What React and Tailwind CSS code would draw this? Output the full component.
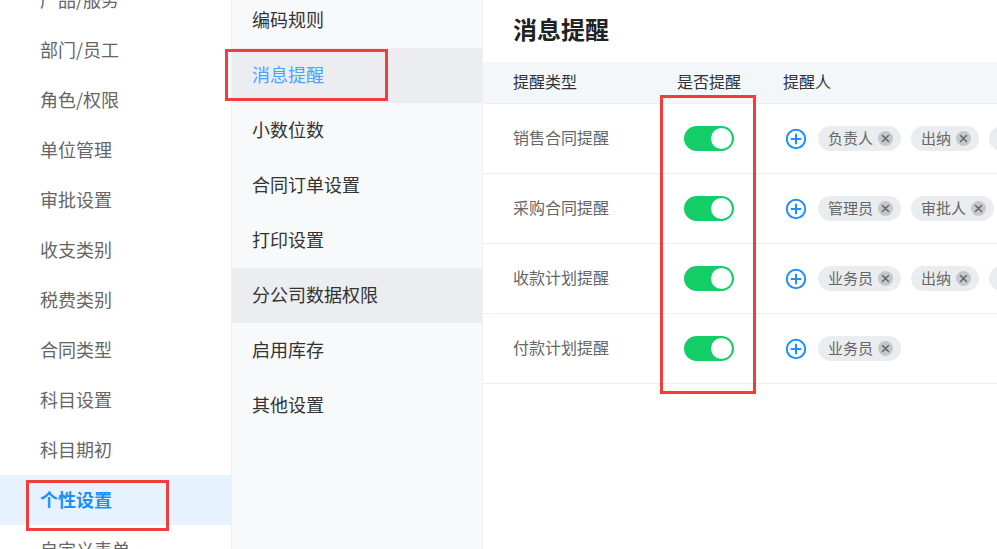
import React from "react";

const font = { fontFamily: '"Noto Sans CJK SC", "Noto Sans", sans-serif' };

const sideItems = ["产品/服务", "部门/员工", "角色/权限", "单位管理", "审批设置", "收支类别", "税费类别", "合同类型", "科目设置", "科目期初", "个性设置", "自定义表单"];
const midItems = ["编码规则", "消息提醒", "小数位数", "合同订单设置", "打印设置", "分公司数据权限", "启用库存", "其他设置"];
const rows = [
  { name: "销售合同提醒", tags: ["负责人", "出纳", "审批人"] },
  { name: "采购合同提醒", tags: ["管理员", "审批人", "出纳"] },
  { name: "收款计划提醒", tags: ["业务员", "出纳", "审批人"] },
  { name: "付款计划提醒", tags: ["业务员"] },
];

function Plus() {
  return (
    <svg width="22" height="22" viewBox="0 0 22 22" className="shrink-0">
      <circle cx="11" cy="11" r="9.2" fill="none" stroke="#1e8fff" strokeWidth="2" />
      <path d="M11 6.5v9M6.5 11h9" stroke="#1e8fff" strokeWidth="2" strokeLinecap="round" />
    </svg>
  );
}

function Tag({ label }) {
  return (
    <div className="flex h-[25px] shrink-0 items-center gap-[5px] rounded-full bg-[#eaedf0] pl-[10px] pr-[8px] text-[15px] text-[#666]">
      <span className="pb-[2px] leading-none">{label}</span>
      <span className="flex h-[15px] w-[15px] items-center justify-center rounded-full bg-[#c4c7cc]">
        <svg width="9" height="9" viewBox="0 0 9 9">
          <path d="M1.5 1.5l6 6M7.5 1.5l-6 6" stroke="#666" strokeWidth="1.5" strokeLinecap="round" />
        </svg>
      </span>
    </div>
  );
}

function Toggle() {
  return (
    <div className="flex h-[25px] w-[50px] items-center justify-end rounded-full bg-[#13ce66] pr-[2px]">
      <div className="h-[21px] w-[21px] rounded-full bg-white" />
    </div>
  );
}

export default function App() {
  return (
    <div className="relative flex h-[549px] w-[997px] overflow-hidden bg-white" style={font}>
      {/* sidebar */}
      <div className="w-[232px] shrink-0 border-r border-[#eef0f3] bg-white">
        <div className="-mt-[25px] flex flex-col">
          {sideItems.map((t) => {
            const active = t === "个性设置";
            return (
              <div
                key={t}
                className={
                  "flex h-[50px] items-center pb-[2px] pl-[40px] text-[18px] " +
                  (active ? "bg-[#e6f3ff] font-bold text-[#1890ff]" : "text-[#666]")
                }
              >
                {t}
              </div>
            );
          })}
        </div>
      </div>

      {/* middle */}
      <div className="w-[251px] shrink-0 border-r border-[#eef0f3] bg-[#f8f9fb]">
        <div className="-mt-[7px] flex flex-col">
          {midItems.map((t) => {
            const active = t === "消息提醒";
            const hl = t === "分公司数据权限";
            return (
              <div
                key={t}
                className={
                  "flex h-[55px] items-center pb-[2px] pl-[20px] text-[18px] " +
                  (active ? "bg-[#ebedf0] text-[#4aa3ff]" : hl ? "bg-[#ebedf0] text-[#333]" : "text-[#333]")
                }
              >
                {t}
              </div>
            );
          })}
        </div>
      </div>

      {/* main */}
      <div className="flex min-w-0 flex-1 flex-col">
        <div className="flex h-[62px] items-center pb-[5px] pl-[30px] text-[24px] font-bold text-[#222]">消息提醒</div>
        <div className="grid h-[42px] grid-cols-[176px_100px_1fr] items-center border-b border-[#ebeef5] bg-[#f4f7fa] pb-[3px] text-[16px] text-[#333]">
          <div className="pl-[30px]">提醒类型</div>
          <div className="text-center">是否提醒</div>
          <div className="pl-[24px]">提醒人</div>
        </div>
        {rows.map((r) => (
          <div key={r.name} className="grid h-[70px] grid-cols-[176px_100px_1fr] items-center border-b border-[#ebeef5] text-[16px] text-[#666]">
            <div className="pb-[3px] pl-[30px]">{r.name}</div>
            <div className="flex justify-center">
              <Toggle />
            </div>
            <div className="flex min-w-0 items-center gap-[10px] overflow-hidden pl-[26px]">
              <Plus />
              <div className="ml-[1px] flex gap-[10px]">
                {r.tags.map((t, i) => (
                  <Tag key={i} label={t} />
                ))}
              </div>
            </div>
          </div>
        ))}
      </div>

      {/* annotation boxes */}
      <div className="pointer-events-none absolute left-[26px] top-[480px] h-[51px] w-[143px] border-[3px] border-[#f23d3d]" />
      <div className="pointer-events-none absolute left-[225px] top-[49px] h-[52px] w-[163px] border-[3px] border-[#f23d3d]" />
      <div className="pointer-events-none absolute left-[660px] top-[95px] h-[299px] w-[96px] border-[3px] border-[#f23d3d]" />
    </div>
  );
}
